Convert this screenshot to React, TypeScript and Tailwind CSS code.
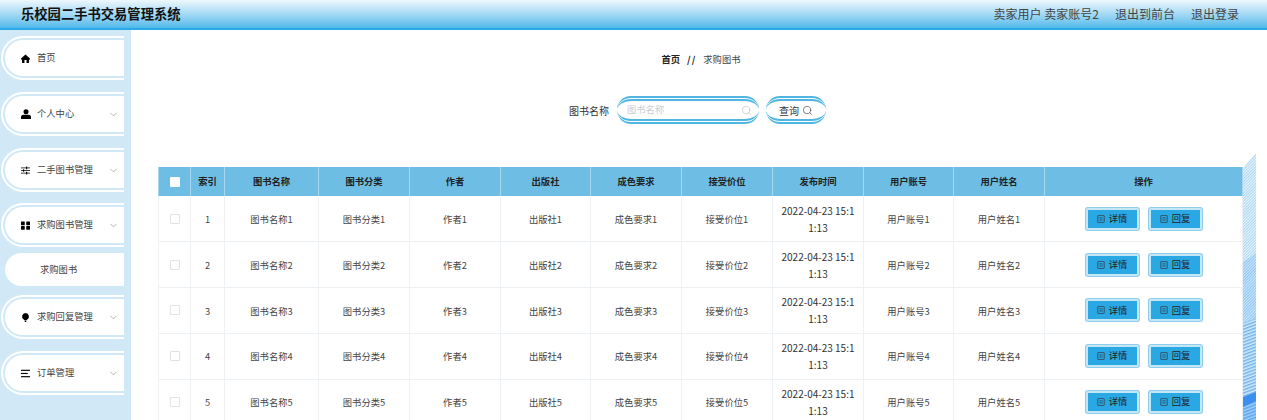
import { ChevronDown, Search } from 'lucide-react';

const font = "font-['Noto_Sans_CJK_SC','Liberation_Sans',sans-serif]";

const columns = [
  { label: '索引', width: 'w-[34px]' },
  { label: '图书名称', width: 'w-[94px]', cell: '图书名称' },
  { label: '图书分类', width: 'w-[91px]', cell: '图书分类' },
  { label: '作者', width: 'w-[91px]', cell: '作者' },
  { label: '出版社', width: 'w-[90px]', cell: '出版社' },
  { label: '成色要求', width: 'w-[91px]', cell: '成色要求' },
  { label: '接受价位', width: 'w-[91px]', cell: '接受价位' },
  { label: '发布时间', width: 'w-[91px]' },
  { label: '用户账号', width: 'w-[90px]', cell: '用户账号' },
  { label: '用户姓名', width: 'w-[91px]', cell: '用户姓名' },
];

function NavIcon({ name }: { name: string }) {
  if (name === 'home') {
    return (
      <svg viewBox="0 0 12 12" className="h-[9px] w-[9px] fill-black">
        <path d="M6 .6 0 6v1.4h1.4V12h3.2V8h2.8v4h3.2V7.4H12V6z" />
      </svg>
    );
  }
  if (name === 'user') {
    return (
      <svg viewBox="0 0 12 12" className="h-[10px] w-[10px] fill-black">
        <circle cx="6" cy="3.2" r="3" />
        <path d="M0 12V9.6C0 8 1.6 7 3 7h6c1.4 0 3 1 3 2.6V12z" />
      </svg>
    );
  }
  if (name === 'sliders') {
    return (
      <svg viewBox="0 0 12 12" className="h-[9px] w-[9px] stroke-black" strokeWidth="1" fill="none">
        <path d="M0 2.5h12M0 6h12M0 9.5h12" />
        <path d="M7.5 .8v3.4M3.5 4.3v3.4M7.5 7.8v3.4" strokeWidth="1.4" />
      </svg>
    );
  }
  if (name === 'grid') {
    return (
      <svg viewBox="0 0 12 12" className="h-[9px] w-[9px] fill-black">
        <rect x="0" y="0.5" width="5" height="5" rx="0.6" />
        <rect x="7" y="0.5" width="5" height="5" rx="0.6" />
        <rect x="0" y="6.5" width="5" height="5" rx="0.6" />
        <rect x="7" y="6.5" width="5" height="5" rx="0.6" />
      </svg>
    );
  }
  if (name === 'bulb') {
    return (
      <svg viewBox="0 0 12 12" className="h-[11px] w-[9px] fill-black">
        <path d="M6 0a4.6 4.6 0 0 0-2.4 8.5L5 10h2l1.4-1.5A4.6 4.6 0 0 0 6 0z" />
        <rect x="5" y="10.6" width="2" height="1.4" />
      </svg>
    );
  }
  return (
    <svg viewBox="0 0 12 12" className="h-[9px] w-[9px] fill-black">
      <rect x="0" y="1" width="12" height="1.5" />
      <rect x="0" y="5.2" width="9" height="1.5" />
      <rect x="0" y="9.5" width="12" height="1.5" />
    </svg>
  );
}

function NavItem({ icon, label, arrow = true, className = '' }: { icon: string; label: string; arrow?: boolean; className?: string }) {
  return (
    <div className={`h-[44px] rounded-l-[22px] border-2 border-r-0 border-white p-[2px] pr-0 ${className}`}>
      <div className="flex h-full items-center rounded-l-[18px] bg-white pl-[16px] pr-[5px] text-[9.3px] text-[#444]">
        <span className="flex w-[16px] items-center"><NavIcon name={icon} /></span>
        <span className="flex-1">{label}</span>
        {arrow && <ChevronDown size={11} className="text-[#777]" strokeWidth={1.2} />}
      </div>
    </div>
  );
}

function Sidebar() {
  return (
    <aside className="w-[131px] shrink-0 bg-[#d1e9f6] pl-[1px] pr-[7px] pt-[6px]">
      <NavItem icon="home" label="首页" arrow={false} />
      <NavItem icon="user" label="个人中心" className="mt-[12px]" />
      <NavItem icon="sliders" label="二手图书管理" className="mt-[12px]" />
      <NavItem icon="grid" label="求购图书管理" className="mt-[11px]" />
      <div className="ml-[4px] mt-[6px] flex h-[33px] items-center rounded-l-[17px] bg-white pl-[35px] text-[9.3px] text-[#444]">
        求购图书
      </div>
      <NavItem icon="bulb" label="求购回复管理" className="mt-[9px]" />
      <NavItem icon="lines" label="订单管理" className="mt-[12px]" />
    </aside>
  );
}

function DocIcon() {
  return (
    <svg viewBox="0 0 10 10" className="h-[8px] w-[8px] fill-none stroke-[#333]" strokeWidth="0.9">
      <rect x="1" y="0.5" width="8" height="9" rx="0.8" />
      <path d="M3 3.6h4M3 6.2h4" />
    </svg>
  );
}

function ActionButton({ label }: { label: string }) {
  return (
    <button className="flex h-[22px] w-[53px] items-center justify-center gap-[4px] rounded-[2px] border-[2px] border-[#c4e6f5] bg-[#2aa8e4] text-[9.3px] text-[#222] shadow-[0_0_0_1px_#8fcdec]">
      <DocIcon />
      {label}
    </button>
  );
}

function Stripe() {
  return (
    <svg viewBox="0 0 13 267" className="absolute left-[1243px] top-[153px] h-[267px] w-[13px]">
      <defs>
        <pattern id="hatch" width="2" height="2" patternUnits="userSpaceOnUse" patternTransform="rotate(-45)">
          <rect width="2" height="2" fill="#eaf5fc" />
          <rect width="2" height="1" fill="#a9d6f3" />
        </pattern>
        <pattern id="hatch2" width="2" height="2" patternUnits="userSpaceOnUse" patternTransform="rotate(-45)">
          <rect width="2" height="2" fill="#cfe6fb" />
          <rect width="2" height="1" fill="#8cc6f5" />
        </pattern>
        <pattern id="hatch3" width="3" height="3" patternUnits="userSpaceOnUse" patternTransform="rotate(-20)">
          <rect width="3" height="3" fill="#d7ebfb" />
          <rect width="3" height="1.5" fill="#6db2f0" />
        </pattern>
        <pattern id="hatch4" width="3" height="3" patternUnits="userSpaceOnUse" patternTransform="rotate(-20)">
          <rect width="3" height="3" fill="#a5d2f9" />
          <rect width="3" height="1.6" fill="#5aa6f2" />
        </pattern>
      </defs>
      <path d="M0 15 13 0V100L0 109z" fill="url(#hatch)" />
      <path d="M0 109 13 100V165L0 170z" fill="url(#hatch2)" />
      <path d="M0 170 13 165V239L0 244z" fill="url(#hatch3)" />
      <path d="M0 244 13 239V267H0z" fill="url(#hatch4)" />
      <path d="M0 244 13 239V248L0 254z" fill="#3a8ff0" />
    </svg>
  );
}

function BookTable() {
  const rows = [1, 2, 3, 4, 5];
  return (
    <table className="w-[1085px] table-fixed border-collapse text-center text-[9.3px] text-[#444]">
      <thead>
        <tr className="h-[29px] bg-[#6dbde4] font-bold text-[#222]">
          <th className="w-[32px] border-x border-[#a5d8f0] font-bold">
            <span className="mx-auto block h-[10px] w-[10px] rounded-[1px] bg-white" />
          </th>
          {columns.map((c) => (
            <th key={c.label} className={`${c.width} border-x border-[#a5d8f0] font-bold`}>{c.label}</th>
          ))}
          <th className="border-x border-[#a5d8f0] font-bold">操作</th>
        </tr>
      </thead>
      <tbody>
        {rows.map((n) => (
          <tr key={n} className="h-[45.8px] border-b border-[#eef1f4]">
            <td className="border-x border-[#eef1f4]">
              <span className="mx-auto block h-[10px] w-[10px] rounded-[1px] border border-[#dfe3e8]" />
            </td>
            {columns.map((c) => (
              <td key={c.label} className={`border-x border-[#eef1f4] ${c.label === '发布时间' ? '' : 'pt-[2px]'}`}>
                {c.label === '索引' && n}
                {c.cell && `${c.cell}${n}`}
                {c.label === '发布时间' && (
                  <span className="mx-auto block w-[74px] break-all text-[10px] leading-[17px] text-[#333]">2022-04-23 15:11:13</span>
                )}
              </td>
            ))}
            <td className="border-x border-[#eef1f4]">
              <div className="flex justify-center gap-[10px]">
                <ActionButton label="详情" />
                <ActionButton label="回复" />
              </div>
            </td>
          </tr>
        ))}
      </tbody>
    </table>
  );
}

export default function App() {
  return (
    <div className={`relative h-[420px] w-[1267px] overflow-hidden bg-white ${font}`}>
      <header className="flex h-[30px] items-center justify-between border-b-2 border-[#2aaae6] bg-gradient-to-b from-[#eef8fd] to-[#4db9ea] pl-[21px] pr-[28px]">
        <div className="text-[13.3px] font-bold text-[#111]">乐校园二手书交易管理系统</div>
        <div className="flex gap-[16px] text-[12px] text-[#444]">
          <span>卖家用户 卖家账号2</span>
          <span>退出到前台</span>
          <span>退出登录</span>
        </div>
      </header>
      <div className="flex h-[390px]">
        <Sidebar />
        <main className="flex-1 overflow-hidden pl-[27px]">
          <div className="flex h-[60px] items-center justify-center pr-[23px] text-[9.3px] text-[#444]">
            <span className="font-bold text-[#222]">首页</span>
            <span className="mx-[7px] font-bold tracking-[1px] text-[#222]">//</span>
            <span>求购图书</span>
          </div>
          <div className="mt-[6px] flex items-center pl-[411px]">
            <span className="text-[10px] text-[#333]">图书名称</span>
            <div className="ml-[8px] flex h-[28px] w-[142px] items-center rounded-full border-y-[5px] border-double border-[#4fb6e3] bg-white pl-[10px] pr-[7px]">
              <span className="flex-1 text-[9.3px] text-[#c9ccd2]">图书名称</span>
              <Search size={11} strokeWidth={1.4} className="text-[#bbb]" />
            </div>
            <div className="ml-[7px] flex h-[28px] w-[60px] items-center justify-center gap-[3px] rounded-full border-y-[5px] border-double border-[#4fb6e3] bg-white text-[10px] text-[#333]">
              查询
              <Search size={11} strokeWidth={1.4} className="text-[#444]" />
            </div>
          </div>
          <div className="mt-[43px]">
            <BookTable />
          </div>
        </main>
      </div>
      <Stripe />
    </div>
  );
}
